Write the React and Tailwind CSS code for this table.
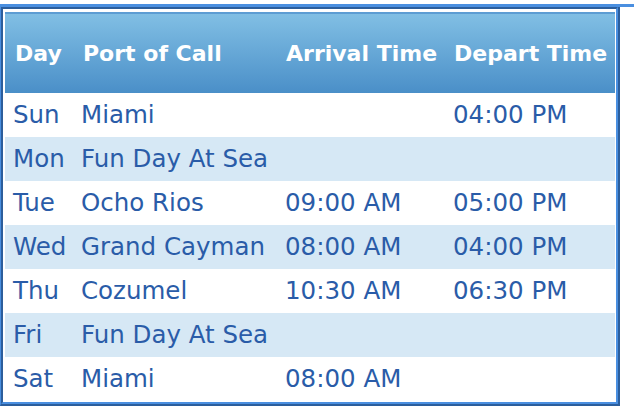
const itinerary = [
  { day: "Sun", port: "Miami", arrive: "", depart: "04:00 PM" },
  { day: "Mon", port: "Fun Day At Sea", arrive: "", depart: "" },
  { day: "Tue", port: "Ocho Rios", arrive: "09:00 AM", depart: "05:00 PM" },
  { day: "Wed", port: "Grand Cayman", arrive: "08:00 AM", depart: "04:00 PM" },
  { day: "Thu", port: "Cozumel", arrive: "10:30 AM", depart: "06:30 PM" },
  { day: "Fri", port: "Fun Day At Sea", arrive: "", depart: "" },
  { day: "Sat", port: "Miami", arrive: "08:00 AM", depart: "" },
];

const cols = "grid grid-cols-[68px_204px_168px_170px]";

export default function App() {
  return (
    <div className="h-[410px] w-[634px] overflow-hidden bg-white pt-[4px] font-['DejaVu_Sans',Verdana,sans-serif]">
      <div className="border-t-[3px] border-[#4a8fe0]">
        <div className="w-[620px] border-b-2 border-l border-r-2 border-b-[#2c5e9c] border-l-[#4a8fe0] border-r-[#2c5e9c]">
          <div className="border-2 border-b-[#4a8fe0] border-l-[#2c5e9c] border-r-[#4a8fe0] border-t-[#2c5e9c] pb-px pl-[2px] pr-px pt-[3px]">
            <div
              className={`${cols} h-[81px] items-center border-t-2 border-[#5d9dd3] bg-linear-to-b from-[#81bfe4] to-[#4a8fc8] text-[22px] font-bold text-white`}
            >
              <div className="pl-[10px]">Day</div>
              <div className="pl-[10px]">Port of Call</div>
              <div className="pl-[9px]">Arrival Time</div>
              <div className="pl-[9px]">Depart Time</div>
            </div>
            {itinerary.map((row, i) => (
              <div
                key={row.day}
                className={`${cols} h-[44px] items-center text-[24.5px] text-[#2a5ca8] ${
                  i % 2 === 1 ? "bg-[#d6e8f5]" : "bg-white"
                }`}
              >
                <div className="pl-[8px]">{row.day}</div>
                <div className="pl-[8px]">{row.port}</div>
                <div className="pl-[8px]">{row.arrive}</div>
                <div className="pl-[8px]">{row.depart}</div>
              </div>
            ))}
          </div>
        </div>
      </div>
    </div>
  );
}
